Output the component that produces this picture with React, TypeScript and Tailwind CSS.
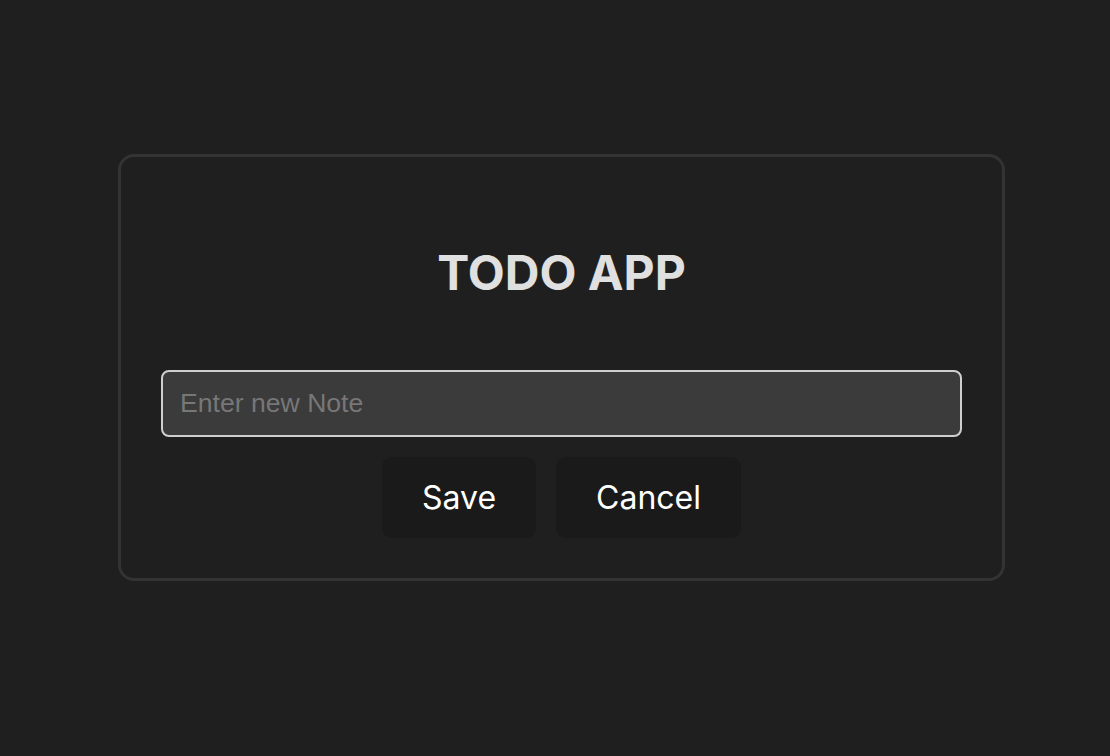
import React, { useState } from 'react';

const App: React.FC = () => {
  const [note, setNote] = useState('');

  return (
    <div className="min-h-screen w-full bg-[#1f1f1f] pt-[154px] pl-[118px] font-['Inter',sans-serif]">
      {/* Card */}
      <div className="w-[887px] h-[427px] rounded-[16px] border-[3px] border-[#333333] px-[40px] pt-[86px] flex flex-col items-center">
        <h1 className="text-[48px] leading-[60px] font-bold text-[#e0e0e0] text-center">TODO APP</h1>

        <input
          type="text"
          value={note}
          onChange={(e) => setNote(e.target.value)}
          placeholder="Enter new Note"
          className="mt-[67px] w-full h-[67px] rounded-[8px] border-2 border-[#cfcfcf] bg-[#3b3b3b] px-[17px] text-[26.6px] text-white placeholder:text-[#777777] font-['Liberation_Sans',Arial,sans-serif] outline-none"
        />

        <div className="mt-[20px] flex gap-[20px]">
          <button className="h-[81px] px-[40px] rounded-[10px] bg-[#1a1a1a] text-white text-[32px] font-normal">
            Save
          </button>
          <button
            onClick={() => setNote('')}
            className="h-[81px] px-[40px] rounded-[10px] bg-[#1a1a1a] text-white text-[32px] font-normal"
          >
            Cancel
          </button>
        </div>
      </div>
    </div>
  );
};

export default App;
